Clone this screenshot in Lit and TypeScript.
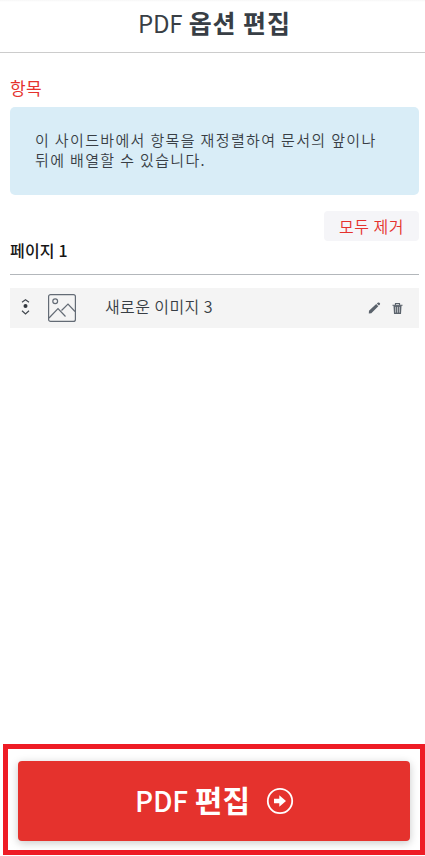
import { LitElement, html, css } from "lit";
import { customElement } from "lit/decorators.js";

@customElement("app-root")
export class AppRoot extends LitElement {
  static styles = css`
    :host {
      display: flex;
      flex-direction: column;
      box-sizing: border-box;
      width: 100%;
      height: 856px;
      padding-bottom: 1px;
      overflow: hidden;
      background: #fff;
      color: #383e45;
      font-family: "Noto Sans CJK KR", "Noto Sans", sans-serif;
      font-size: 16px;
    }
    * { box-sizing: border-box; }
    svg { display: block; flex: none; }
    header {
      height: 53px;
      border-bottom: 1px solid #ccc;
      background: linear-gradient(#f6f6f6, #fff 2px);
      padding-left: 4px;
      text-align: center;
    }
    h1 {
      margin: 0;
      font-size: 25px;
      line-height: 45px;
      font-weight: 700;
      letter-spacing: .9px;
      white-space: nowrap;
    }
    .latin { font-size: 24px; font-weight: 400; letter-spacing: -0.3px; }
    main { flex: 1; padding: 0 6px 0 10px; }
    h2 {
      margin: 24px 0 0;
      height: 30px;
      line-height: 21px;
      font-size: 17px;
      font-weight: 400;
      letter-spacing: .4px;
      color: #e5322d;
    }
    .info {
      height: 88px;
      margin: 0;
      padding: 23px 24px 0 25px;
      border-radius: 5px;
      background: #d9edf7;
      font-size: 15px;
      line-height: 20px;
      font-weight: 350;
      letter-spacing: 1.35px;
      white-space: nowrap;
    }
    .actions { display: flex; justify-content: flex-end; margin-top: 16px; }
    .clear {
      width: 95px;
      height: 30px;
      padding: 0;
      border: 0;
      border-radius: 4px;
      background: #f5f5f8;
      color: #e5322d;
      font: 350 16px/28px "Noto Sans CJK KR", sans-serif;
      letter-spacing: .5px;
    }
    h3 {
      margin: 0;
      height: 34px;
      border-bottom: 1px solid #b3b7bb;
      color: #161616;
      font-size: 16px;
      font-weight: 500;
      line-height: 19px;
      letter-spacing: .2px;
    }
    .item {
      display: flex;
      align-items: center;
      height: 40px;
      margin-top: 13px;
      padding: 0 16px 0 11px;
      background: #f4f4f4;
    }
    .thumb { margin-left: 18px; }
    .name {
      flex: 1;
      margin-left: 29px;
      padding-bottom: 4px;
      line-height: 20px;
      font-weight: 350;
      letter-spacing: .4px;
    }
    .trash { margin-left: 11px; }
    .frame {
      height: 111px;
      margin-left: 3px;
      padding: 12px 10px;
      border: 5px solid #ee1c25;
    }
    .submit {
      display: flex;
      align-items: center;
      justify-content: center;
      gap: 16px;
      width: 392px;
      height: 80px;
      padding: 0 0 0 1px;
      border: 0;
      border-radius: 4px;
      background: #e5322d;
      box-shadow: 0 2px 8px rgba(0, 0, 0, .22);
      color: #fff;
      font: 700 30px/40px "Noto Sans CJK KR", sans-serif;
      white-space: nowrap;
    }
    .submit > span { padding-bottom: 3px; }
    .submit .latin { font-size: 28px; font-weight: 500; letter-spacing: -.2px; }
  `;

  render() {
    return html`
      <header><h1><span class="latin">PDF</span> 옵션 편집</h1></header>
      <main>
        <h2>항목</h2>
        <p class="info">이 사이드바에서 항목을 재정렬하여 문서의 앞이나<br />뒤에 배열할 수 있습니다.</p>
        <div class="actions"><button class="clear">모두 제거</button></div>
        <h3>페이지 1</h3>
        <div class="item">
          <svg width="9" height="18" viewBox="0 0 9 18" fill="none" stroke="#42484f" stroke-width="1.2">
            <path d="M1 3.2 4.5 .8 8 3.2M1 11.8 4.5 15 8 11.8" />
            <circle cx="4.5" cy="7" r="2" fill="#33383e" stroke="none" />
          </svg>
          <svg class="thumb" width="28" height="28" viewBox="0 0 28 28" fill="none" stroke="#636b75" stroke-width="1.2">
            <rect x=".6" y=".6" width="26.8" height="26.8" rx="2" />
            <circle cx="7.2" cy="7.3" r="2.4" />
            <path d="M1 24 10 14.5 17.5 22.5M13.5 16.5 20 10 27 17.5" />
          </svg>
          <span class="name">새로운 이미지 3</span>
          <svg width="13" height="13" viewBox="0 0 13 13" fill="#5b636c">
            <path d="M1 8.8 8.2 2.1 10.3 4.2 3.3 11.3 .8 11.5ZM8.8 1.5 10.1 .6Q10.8.2 11.4 .8L11.9 1.2Q12.4 1.8 11.9 2.4L10.9 3.6Z" />
          </svg>
          <svg class="trash" width="11" height="13" viewBox="0 0 12 13" fill="none" stroke="#5b636c">
            <path d="M.5 3H11.5M3.8 2.7V1.1H8.2V2.7" stroke-width="1.2" />
            <path d="M1.6 3H10.4L9.8 12.5H2.2Z" fill="#5b636c" stroke="none" />
            <path d="M3.9 4.7V11M6 4.7V11M8.1 4.7V11" stroke="#d9dadc" stroke-width=".8" />
          </svg>
        </div>
      </main>
      <div class="frame">
        <button class="submit">
          <span><span class="latin">PDF</span> 편집</span>
          <svg width="28" height="28" viewBox="0 0 28 28">
            <circle cx="14" cy="14" r="12.2" fill="none" stroke="#fff" stroke-width="1.8" />
            <path d="M8 11.8H13.3V8.2L20 14 13.3 19.8V16.2H8Z" fill="#fff" />
          </svg>
        </button>
      </div>
    `;
  }
}
